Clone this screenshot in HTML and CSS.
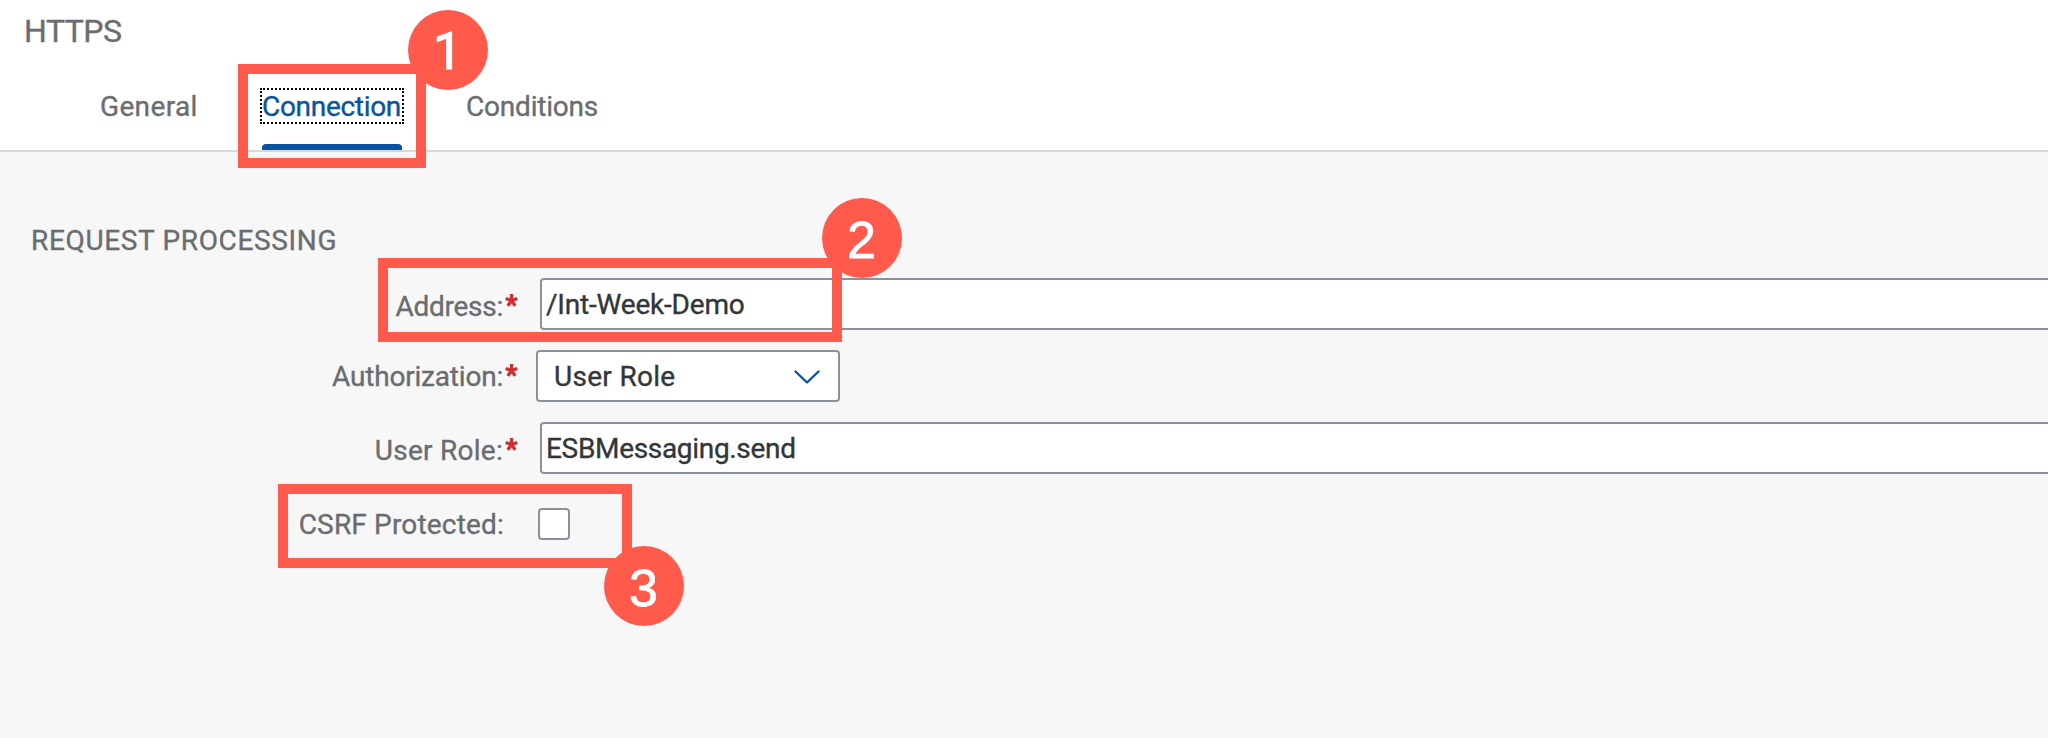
FILE: index.html
```
<!DOCTYPE html>
<html lang="en">
<head>
<meta charset="utf-8">
<title>HTTPS</title>
<link rel="stylesheet" href="styles.css">
</head>
<body>
<header class="header">
  <h1 class="title"><span class="t-https">HTTPS</span></h1>
  <nav class="tabs">
    <a class="tab tab-first"><span class="t-general">General</span></a>
    <a class="tab tab-active"><span class="t-connection">Connection</span></a>
    <a class="tab"><span class="t-conditions">Conditions</span></a>
  </nav>
</header>
<main class="content">
  <h2 class="section"><span class="t-section">REQUEST PROCESSING</span></h2>
  <div class="row">
    <label class="label label-low"><span class="t-address">Address:</span><svg class="star" viewBox="0 0 12 12"><path d="M6 6V0M6 6L.6 4.2M6 6L11.4 4.2M6 6L2.6 11M6 6L9.4 11"/></svg></label>
    <div class="input"><span class="t-path">/Int-Week-Demo</span></div>
  </div>
  <div class="row">
    <label class="label"><span class="t-auth">Authorization:</span><svg class="star" viewBox="0 0 12 12"><path d="M6 6V0M6 6L.6 4.2M6 6L11.4 4.2M6 6L2.6 11M6 6L9.4 11"/></svg></label>
    <div class="select"><span class="t-role">User Role</span><svg class="chevron" viewBox="0 0 26 14"><path d="M1.5 1.5L13 12.5L24.5 1.5"/></svg></div>
  </div>
  <div class="row">
    <label class="label label-low"><span class="t-rolelabel">User Role:</span><svg class="star" viewBox="0 0 12 12"><path d="M6 6V0M6 6L.6 4.2M6 6L11.4 4.2M6 6L2.6 11M6 6L9.4 11"/></svg></label>
    <div class="input"><span class="t-esb">ESBMessaging.send</span></div>
  </div>
  <div class="row row-check">
    <label class="label label-optional"><span class="t-csrf">CSRF Protected:</span></label>
    <div class="checkbox"></div>
  </div>
</main>
<div class="frame frame-1"></div><div class="badge badge-1">1</div>
<div class="frame frame-2"></div><div class="badge badge-2">2</div>
<div class="frame frame-3"></div><div class="badge badge-3">3</div>
</body>
</html>
```
FILE: styles.css
```
* { box-sizing: border-box; }
body {
  margin: 0;
  position: relative;
  height: 738px;
  overflow: hidden;
  background: #f7f7f7;
  color: #6a6d70;
  font: 28px/36px Roboto, "Liberation Sans", sans-serif;
  -webkit-text-stroke: .35px currentColor;
  white-space: nowrap;
}
.header {
  height: 152px;
  background: #fff;
  border-bottom: 2px solid #d9d9d9;
}
.title {
  margin: 0;
  padding: 11px 0 0 24px;
  height: 88px;
  font-size: 32px;
  line-height: 40px;
  font-weight: 400;
}
.tabs {
  display: flex;
  gap: 64px;
  height: 62px;
  padding-left: 100px;
}
.tab { height: 62px; padding-top: 1px; }
.tab-first { width: 98px; }
.tab-active {
  display: flex;
  flex-direction: column;
  justify-content: space-between;
  width: 140px;
  padding-top: 0;
  color: #0854a0;
}
.tab-active span {
  display: block;
  width: 144px;
  height: 36px;
  margin-left: -2px;
  line-height: 34px;
  border: 2px dotted #000;
}
.tab-active::after {
  content: "";
  height: 6px;
  border-radius: 4px 4px 0 0;
  background: #0854a0;
}
.content { padding-top: 71px; }
.section {
  margin: 0;
  padding-left: 31px;
  height: 45px;
  font-size: 28px;
  line-height: 36px;
  font-weight: 400;
}
.row { display: flex; align-items: center; height: 72px; }
.row-check { height: 80px; }
.label {
  display: flex;
  justify-content: flex-end;
  align-items: flex-start;
  gap: 2px;
  width: 518px;
  height: 36px;
  padding-top: 1px;
}
.label-low { height: 40px; padding-top: 5px; }
.label-optional { width: 504px; }
.star {
  width: 13px;
  height: 13px;
  margin-top: 5px;
  fill: none;
  stroke: #cc2f2f;
  stroke-width: 3;
  overflow: visible;
}
.input {
  flex: 1;
  height: 52px;
  margin: 0 -10px 0 22px;
  padding: 7px 4px;
  border: 2px solid #89919a;
  border-radius: 4px;
  background: #fff;
  color: #32363a;
}
.select {
  display: flex;
  align-items: center;
  justify-content: space-between;
  width: 304px;
  height: 52px;
  margin-left: 18px;
  padding: 2px 18px 0 16px;
  border: 2px solid #89919a;
  border-radius: 4px;
  background: #fff;
  color: #32363a;
}
.chevron {
  width: 26px;
  height: 14px;
  fill: none;
  stroke: #0854a0;
  stroke-width: 2.4;
  stroke-linecap: round;
  stroke-linejoin: round;
}
.checkbox {
  width: 32px;
  height: 32px;
  margin-left: 34px;
  border: 2px solid #89919a;
  border-radius: 4px;
  background: #fff;
}
/* Tracking per text */
.t-https { letter-spacing: -.5px; }
.t-general { letter-spacing: .35px; }
.t-connection { letter-spacing: -.3px; }
.t-conditions { letter-spacing: -.2px; }
.t-section { letter-spacing: .65px; }
.t-address { letter-spacing: -.25px; }
.t-auth { letter-spacing: -.2px; }
.t-rolelabel { letter-spacing: .26px; }
.t-csrf { letter-spacing: .18px; }
.t-path { letter-spacing: -.2px; }
.t-esb { letter-spacing: -.32px; }
.t-role { letter-spacing: .3px; }
/* Callouts over the form */
.frame { position: absolute; border: 10px solid #ff5a4c; }
.frame-1 { left: 238px; top: 64px; width: 188px; height: 104px; }
.frame-2 { left: 378px; top: 258px; width: 464px; height: 84px; }
.frame-3 { left: 278px; top: 484px; width: 354px; height: 84px; }
.badge {
  position: absolute;
  width: 80px;
  height: 80px;
  border-radius: 50%;
  background: #ff5a4c;
  color: #fff;
  font: 52px/84px "Liberation Sans", Arial, sans-serif;
  text-align: center;
  text-indent: -1px;
  -webkit-text-stroke: .8px #fff;
}
.badge-1 { left: 408px; top: 10px; font-family: Roboto, sans-serif; -webkit-text-stroke: 1.2px #fff; }
.badge-2 { left: 822px; top: 198px; }
.badge-3 { left: 604px; top: 546px; }
```
